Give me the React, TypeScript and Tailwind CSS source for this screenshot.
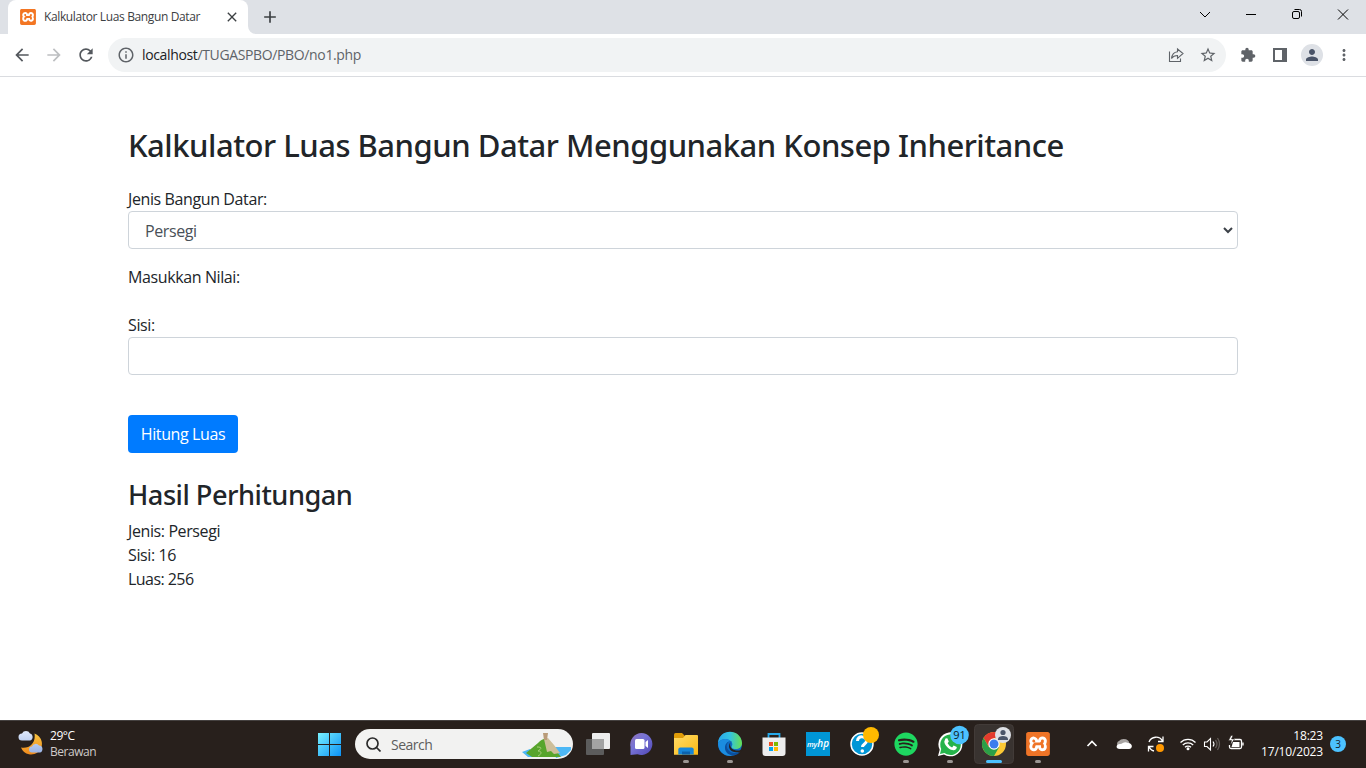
import React from "react";
import { MdArrowBack, MdArrowForward, MdRefresh, MdInfoOutline, MdExtension, MdStarBorder, MdPerson, MdMoreVert, MdClose, MdAdd } from "react-icons/md";
import { FaSpotify } from "react-icons/fa";
import { SiXampp } from "react-icons/si";

function XamppLogo({ className }: { className: string }) {
  return <span className={`block rounded-[2px] bg-white text-[#f37623] ${className}`}><SiXampp className="size-full" /></span>;
}

function BrowserTabs() {
  return (
    <div className="flex h-[34px] shrink-0 bg-[#dee1e6]">
      <div className="ml-2 flex w-60 items-center rounded-t-lg bg-white pr-2 pl-3">
        <XamppLogo className="size-4" />
        <span className="ml-2 flex-1 text-[12px] tracking-[-0.370px] whitespace-nowrap text-[#3c4043]">Kalkulator Luas Bangun Datar</span>
        <MdClose className="size-4 text-[#3c4043]" />
      </div>
      <div className="relative flex items-center">
        <svg className="absolute bottom-0 left-0" width="8" height="8"><path d="M0 0v8h8a8 8 0 0 1-8-8z" fill="#fff" /></svg>
        <MdAdd className="ml-3 size-5 text-[#3c4043]" />
      </div>
      <svg className="ml-auto" width="184" height="34" fill="none" stroke="#000">
        <path d="M18 12l5 5 5-5M64 14.500h10" />
        <rect x="110.500" y="11.500" width="7" height="7" rx="1.500" />
        <path d="M112.500 9.500h5a2 2 0 0 1 2 2v5M156 9.500l10 10M166 9.500l-10 10" />
      </svg>
    </div>
  );
}

function Toolbar() {
  return (
    <div className="flex h-[43px] shrink-0 items-center border-b border-[#dadce0] text-[#5f6368]">
      <MdArrowBack className="ml-3 size-5 text-[#54585d]" />
      <MdArrowForward className="ml-3 size-5 text-[#bdbfc1]" />
      <MdRefresh className="ml-3 size-5 text-[#54585d]" />
      <div className="ml-3 flex h-[34px] w-[1118px] items-center rounded-full bg-[#f1f3f4] pr-[9px] pl-[9px]">
        <MdInfoOutline className="size-[18px]" />
        <span className="ml-[7px] flex-1 pb-px text-[14px] tracking-[-0.360px]"><span className="text-[#202124]">localhost</span>/TUGASPBO/PBO/no1.php</span>
        <svg width="16" height="16" fill="none" stroke="#5f6368" strokeWidth="1.100">
          <path d="M1.500 4.500v10h11v-3M9.500 2v2.700C6 5 4 7.500 3.500 11.500c1.500-2.200 3.500-3 6-3v2.800L15 6.500z" />
        </svg>
        <MdStarBorder className="ml-[15px] size-[18px]" />
      </div>
      <MdExtension className="ml-3.5 size-4" />
      <svg className="ml-4" width="16" height="16"><path d="M1 1h14v14H1zM3 3v10h7V3z" fillRule="evenodd" fill="#5f6368" /></svg>
      <div className="ml-[13px] flex size-[22px] items-center justify-center rounded-full bg-[#dee1e6]"><MdPerson className="size-[18px] text-[#4a5468]" /></div>
      <MdMoreVert className="ml-3 size-[18px]" />
    </div>
  );
}

function Calculator() {
  return (
    <main className="mx-auto w-[1110px] flex-1 pt-12 text-[16px] leading-6 tracking-[-0.390px] text-[#212529]">
      <h2 className="mb-[22.6px] pt-px font-['Noto_Sans',sans-serif] text-[31px] leading-[38.4px] font-medium tracking-[-0.490px] whitespace-nowrap">Kalkulator Luas Bangun Datar Menggunakan Konsep Inheritance</h2>
      <p>Jenis Bangun Datar:</p>
      <div className="mb-4 flex h-[38px] items-center justify-between rounded border border-[#ced4da] pr-1 pl-4 text-[#495057]">
        <span className="pt-0.5">Persegi</span>
        <svg width="10" height="8" fill="none" stroke="#3c4148" strokeWidth="2"><path d="M1 2l4 4 4-4" /></svg>
      </div>
      <p className="mb-6">Masukkan Nilai:</p>
      <p>Sisi:</p>
      <div className="mb-10 h-[38px] rounded border border-[#ced4da]" />
      <button className="block h-[38px] w-[110px] rounded bg-[#007bff] whitespace-nowrap text-white">Hitung Luas</button>
      <h3 className="mt-[22px] mb-[7px] pt-[3px] font-['Noto_Sans',sans-serif] text-[27.200px] leading-[33.6px] font-medium tracking-[-0.500px]">Hasil Perhitungan</h3>
      <p>Jenis: Persegi</p>
      <p>Sisi: 16</p>
      <p className="tracking-[-0.550px]">Luas: 256</p>
    </main>
  );
}

function AppSlot({ children, open, active }: { children?: React.ReactNode; open?: boolean; active?: boolean }) {
  return (
    <svg width="44" height="47" viewBox="0 1 44 47" className="shrink-0">
      {active && <rect x="2.500" y="4.500" width="39" height="39" rx="4" fill="#393330" stroke="#423b38" />}
      {children}
      {open && <rect x="19" y="40" width="6" height="3" rx="1.500" fill="#9b9693" />}
      {active && <rect x="14" y="40" width="16" height="3" rx="1.500" fill="#4cc2ff" />}
    </svg>
  );
}

function Taskbar() {
  return (
    <footer className="flex h-12 shrink-0 border-t border-[#454140] bg-[#28201c] text-white">
      <div className="flex w-[307px] items-center pl-[18px]">
        <svg width="26" height="26" className="mb-1">
          <defs>
            <linearGradient id="moon" x1="0" y1="0" x2="0" y2="1"><stop stopColor="#f9c440" /><stop offset="1" stopColor="#f08a1c" /></linearGradient>
            <linearGradient id="cloud" x1="0" y1="0" x2="0" y2="1"><stop stopColor="#dfe9fb" /><stop offset="1" stopColor="#9bb5e6" /></linearGradient>
          </defs>
          <path d="M16.500 3.500a10.800 10.800 0 1 1-13.500 14c9 1.500 15-5 13.500-14z" fill="url(#moon)" />
          <path d="M4 10.500a3.500 3.500 0 0 1 0-7 4.500 4.500 0 0 1 8 0c4 1 3 7 0 7zM14 22.500a3 3 0 0 1 0-6 4 4 0 0 1 7-1c5 0 4 7 1 7z" fill="url(#cloud)" />
        </svg>
        <div className="ml-1.5 pb-px text-[12px] leading-4 tracking-[-0.450px]"><p>29°C</p><p className="text-[#cfcbc9]">Berawan</p></div>
      </div>
      <AppSlot>
        <defs><linearGradient id="win" x1="10" y1="13" x2="34" y2="36" gradientUnits="userSpaceOnUse"><stop stopColor="#7af3ff" /><stop offset="1" stopColor="#0b91f5" /></linearGradient></defs>
        <path d="M11 13h11v11H11zM23 13h11v11H23zM11 25h11v11H11zM23 25h11v11H23z" fill="url(#win)" />
      </AppSlot>
      <div className="mt-2 mr-[3px] ml-1 flex h-[30px] w-[218px] items-center overflow-hidden rounded-full bg-[#f2f2f1] pl-[11px]">
        <svg width="15" height="15" fill="none" stroke="#2a2a2a" strokeWidth="1.700"><circle cx="6.500" cy="6.500" r="5.500" /><path d="M10.500 10.500l4 4" /></svg>
        <span className="ml-2.5 flex-1 text-[14px] tracking-[-0.500px] text-[#5d5d5d]">Search</span>
        <svg width="51" height="30">
          <path d="M0 23l8-3 5 8H6zM31 18h18v3l-5 5-10 3z" fill="#4db8f5" />
          <path d="M4 24L16 14q5-5 9-4L39 28H10z" fill="#58a52c" />
          <path d="M22 10l4-1 6 7 6 8-6 1-3-3-4 1z" fill="#cdbf9a" />
          <path d="M21 4h5l-1 7h-3z" fill="#b99b78" />
          <path d="M15 18c6 0 4 2 1 4 4 0 4 3 0 5" stroke="#a9cf7c" fill="none" />
        </svg>
      </div>
      <AppSlot>
        <rect x="16" y="13" width="18" height="16" rx="1" fill="#ededed" /><rect x="10" y="19" width="18" height="16" rx="1" fill="#5c5c5c" /><path d="M16 19h12v10H16z" fill="#a3a3a3" />
      </AppSlot>
      <AppSlot><defs><linearGradient id="chat" x1="0" x2="1" y1="0" y2="1"><stop stopColor="#8f71b8" /><stop offset=".4" stopColor="#7774d6" /><stop offset="1" stopColor="#5046b5" /></linearGradient></defs>
        <path d="M21.500 13a11 11 0 1 1-4 21.300L10.500 35v-8A11.500 11.500 0 0 1 21.500 13z" fill="url(#chat)" /><rect x="15" y="19" width="9.500" height="10" rx="1.500" fill="#fff" /><path d="M25.500 22l2.500-2v8l-2.500-2z" fill="#fff" />
      </AppSlot>
      <AppSlot open><defs><linearGradient id="fold" x1="0" x2="1" y1="0" y2="1"><stop stopColor="#ffdc68" /><stop offset="1" stopColor="#fdb913" /></linearGradient></defs>
        <path d="M10 14.500q0-1.500 1.500-1.500H18l3 3v4H10z" fill="#e09c08" /><path d="M10 18h9l2.500-3H33q1 0 1 1v18.700H10z" fill="url(#fold)" /><path d="M14.300 34.500v-5q0-2 2-2h11.400q2 0 2 2v5z" fill="#1686d9" /><path d="M18 31.500h8v3h-8z" fill="#0c62ad" />
      </AppSlot>
      <AppSlot open>
        <defs><linearGradient id="eg" x1="0" x2="1" y1=".5" y2=".5"><stop stopColor="#2aa7e8" /><stop offset=".5" stopColor="#33c3e0" /><stop offset="1" stopColor="#67e04f" /></linearGradient></defs>
        <circle cx="22" cy="24" r="12" fill="#0f6cc4" />
        <path d="M10 23C11 8 33 8 34 23c0 5-4 6.500-7.500 6-3-.5-3.500-2-2.200-4C25 19 14 16 10 23z" fill="url(#eg)" />
        <path d="M10 23c4-6 12-4 12-2-5 2-6 10 2 14.500C16 37 10 31 10 23z" fill="#1b8de0" />
        <path d="M22 21c-6 3-3 12 5 12 3 0 5-1 5.500-2C29 38 17 36 17 28c0-4 2-6 5-7z" fill="#0b4f9e" />
        <path d="M24 21.500c-3 0-3 8 4 9 4 .3 5-.6 7-1.500l-2 3c-5 1-11 0-12-5 0-3 1-5 3-5.500z" fill="#28201c" />
      </AppSlot>
      <AppSlot>
        <path d="M16.500 18v-4h11v4" fill="none" stroke="#26a9ea" strokeWidth="1.800" /><path d="M10.500 17.500h23V33q0 3-3 3h-17q-3 0-3-3z" fill="#ededed" />
        <path d="M17 22h4v4h-4z" fill="#f25022" /><path d="M22 22h4v4h-4z" fill="#7fba00" /><path d="M17 27h4v4h-4z" fill="#00a4ef" /><path d="M22 27h4v4h-4z" fill="#ffb900" />
      </AppSlot>
      <AppSlot><rect x="10" y="12" width="24" height="24" fill="#0096d6" /><text x="22" y="27" textAnchor="middle" fontSize="7.500" fontWeight="600" fontStyle="italic" fill="#fff">my<tspan fontSize="10">hp</tspan></text></AppSlot>
      <AppSlot><circle cx="22" cy="24" r="11" fill="#0096d6" stroke="#fff" strokeWidth="1.500" /><path d="M17.500 21c0-6 9-5 9 0 0 3-4 3-4 6" stroke="#fff" strokeWidth="3" fill="none" /><circle cx="22.300" cy="31" r="1.800" fill="#fff" /><circle cx="31" cy="15" r="8" fill="#ffb900" /></AppSlot>
      <AppSlot open><FaSpotify x="10" y="12" size={24} color="#1ed760" /></AppSlot>
      <AppSlot open>
        <path d="M10 36l1.700-6.200A12 12 0 1 1 16 34.500z" fill="#fff" /><path d="M12 34l1.200-5A10.300 10.300 0 1 1 16.500 33z" fill="#25b34b" />
        <path d="M17.500 18.500l1.800-.3 1.500 3.300-1.200 1.700q1.500 3 4.500 4.200l1.500-1.800 3.200 1.500c.2 2.500-2.300 3.700-4.300 3-4-1-8-5-8.200-8.700z" fill="#fff" />
        <circle cx="31.500" cy="15" r="9.300" fill="#4cc2ff" /><text x="31.500" y="19" textAnchor="middle" fontSize="11" fill="#101820">91</text>
      </AppSlot>
      <AppSlot active>
        <circle cx="22" cy="24" r="12" fill="#fcc934" /><path d="M22 18h10.400A12 12 0 0 0 11.600 18L17 27z" fill="#e33b2e" /><path d="M11.600 18A12 12 0 0 0 22 36l5.200-9H16.800z" fill="#2b9f48" />
        <circle cx="22" cy="24" r="5.700" fill="#fff" /><circle cx="22" cy="24" r="4.500" fill="#3b7ded" />
        <circle cx="31" cy="15" r="8" fill="#dee1e6" /><circle cx="31" cy="12.500" r="2.600" fill="#4a5468" /><path d="M26 20v-1c0-4 10-4 10 0v1z" fill="#4a5468" />
      </AppSlot>
      <AppSlot open><rect x="11" y="13" width="22" height="22" rx="2" fill="#fff" /><SiXampp x="10" y="12" size={24} color="#ef7427" /></AppSlot>
      <svg width="184" height="47" viewBox="1060 1 184 47" fill="none" stroke="#fff" strokeWidth="1.300">
        <path d="M1087.500 26l4.500-4.500 4.500 4.500" strokeWidth="1.700" />
        <path d="M1118 26a3 3 0 0 1 1-5 6 5 0 0 1 9-.5q2 1.500 1 5.500z" fill="#a8a4a2" stroke="none" /><path d="M1120 29c-5 0-4-5 0-5 3 0 4-3 8-1 5 0 5 6 1 6z" fill="#fff" stroke="none" />
        <path d="M1149 22a7.500 7.500 0 0 1 13.500-1M1163 16.500v5h-5M1149 26a7 7 0 0 0 5 5M1148.500 31.500v-5h5" /><circle cx="1160" cy="28" r="4" fill="#ff9800" stroke="none" />
        <path d="M1180.500 22.500a10.500 10.500 0 0 1 15 0M1182.800 25a7.300 7.300 0 0 1 10.400 0M1185 27.300a4.200 4.200 0 0 1 6 0" /><circle cx="1188" cy="28.800" r="1.500" fill="#fff" stroke="none" />
        <path d="M1204.500 22h2.500l3.500-3.500v11.500l-3.500-3.500h-2.500zM1213 21.500q2 2.500 0 5" strokeWidth="1.100" /><path d="M1215.500 20q3 4 0 8M1217.500 18q4 6 0 12" stroke="#625b57" />
        <path d="M1234 19.500h6q1.500 0 1.500 1.500v6q0 1.500-1.500 1.500h-9q-1.500 0-1.500-1.500v-2M1243 22.500v3" /><path d="M1233 22h6.500v5h-8z" fill="#fff" stroke="none" /><path d="M1231 15.500l-2.500 5h3l-1 4.500 4-6h-3l1.500-3.500z" fill="#fff" stroke="#28201c" strokeWidth=".5" />
      </svg>
      <div className="mt-[7px] ml-auto text-right text-[12px] leading-4 tracking-[-0.170px] whitespace-nowrap"><p>18:23</p><p>17/10/2023</p></div>
      <div className="mt-[15px] mr-5 ml-[7px] flex size-4 shrink-0 items-center justify-center rounded-full bg-[#4cc2ff] text-[10px] text-[#14202a]">3</div>
    </footer>
  );
}

export default function App() {
  return (
    <div className="flex h-[768px] w-[1366px] flex-col overflow-hidden bg-white font-['Open_Sans','Noto_Sans',sans-serif]">
      <BrowserTabs />
      <Toolbar />
      <Calculator />
      <Taskbar />
    </div>
  );
}
